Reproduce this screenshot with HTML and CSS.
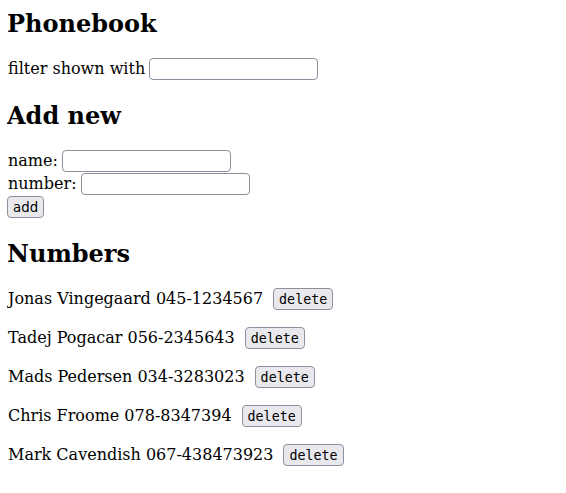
FILE: index.html
```html
<!DOCTYPE html>
<html>
<head>
<meta charset="utf-8">
<link rel="stylesheet" href="styles.css">
</head>
<body>
<div class="app">
  <h2 class="title first">Phonebook</h2>
  <div class="row"><span class="label">filter shown with</span><input class="text-input" type="text"></div>
  <h2 class="title">Add new</h2>
  <form class="form">
    <div class="row"><span class="label">name:</span><input class="text-input" type="text"></div>
    <div class="row"><span class="label">number:</span><input class="text-input" type="text"></div>
    <div class="row"><button class="btn" type="submit">add</button></div>
  </form>
  <h2 class="title">Numbers</h2>
  <p class="row person"><span class="label">Jonas Vingegaard 045-1234567</span><button class="btn btn-delete">delete</button></p>
  <p class="row person"><span class="label">Tadej Pogacar 056-2345643</span><button class="btn btn-delete">delete</button></p>
  <p class="row person"><span class="label">Mads Pedersen 034-3283023</span><button class="btn btn-delete">delete</button></p>
  <p class="row person"><span class="label">Chris Froome 078-8347394</span><button class="btn btn-delete">delete</button></p>
  <p class="row person"><span class="label">Mark Cavendish 067-438473923</span><button class="btn btn-delete">delete</button></p>
</div>
</body>
</html>
```
FILE: styles.css
```css
body {
  margin: 8px 8px 8px 7px;
  font-family: "DejaVu Serif", serif;
  font-size: 16px;
  color: #000;
  background: #fff;
}
.title {
  font-size: 24px;
  font-weight: bold;
  line-height: 28px;
  padding-top: 2px;
  margin: 20px 0 19px;
}
.title.first {
  margin-top: 0;
}
.form {
  margin: 0;
}
.row {
  display: flex;
  align-items: flex-end;
  height: 23px;
  line-height: 19px;
}
.label {
  margin: 0 4px 2px 0;
  padding-left: 1px;
}
.person {
  margin: 16px 0;
}
.person .label {
  margin-right: 10px;
}
.text-input {
  box-sizing: border-box;
  width: 169px;
  height: 22px;
  border: 1px solid #8f8f9d;
  border-radius: 4px;
  padding: 1px 4px;
  margin: 0;
  background: #fff;
  font-family: "DejaVu Sans", sans-serif;
  font-size: 13.33px;
}
.btn {
  box-sizing: border-box;
  height: 22px;
  padding: 2px 5px 0;
  margin: 0;
  border: 1px solid #8f8f9d;
  border-radius: 4px;
  background: #e9e9ed;
  color: #000;
  font-family: "DejaVu Sans", sans-serif;
  font-size: 13.33px;
  line-height: 18px;
}
.btn-delete {
  font-family: "DejaVu Sans Mono", monospace;
}
```
